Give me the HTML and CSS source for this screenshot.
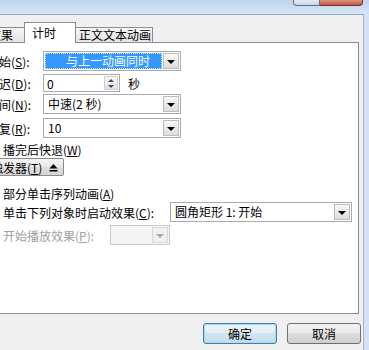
FILE: index.html
```html
<!DOCTYPE html>
<html lang="zh-CN">
<head>
  <meta charset="UTF-8" />
  <meta name="viewport" content="width=device-width, initial-scale=1.0"/>
  <title>计时</title>
  <link rel="stylesheet" href="styles.css">
</head>
<body>

<div class="window">
  <div class="titlebar">
    <span class="cap-btn cap-max"></span>
    <span class="cap-btn cap-close"></span>
  </div>

  <div class="client">
    <div class="tabs">
      <div class="tab tab-first">效果</div>
      <div class="tab tab-active">计时</div>
      <div class="tab tab-last">正文文本动画</div>
    </div>

    <div class="panel">
      <div class="row row-start">
        <span class="lbl">开始(<u>S</u>):</span>
        <div class="combo combo-main">
          <span class="combo-value combo-focus">与上一动画同时</span>
          <span class="combo-drop"></span>
        </div>
      </div>

      <div class="row row-delay">
        <span class="lbl">延迟(<u>D</u>):</span>
        <div class="spin-box">
          <span class="spin-value">0</span>
          <span class="spin">
            <span class="spin-up"></span>
            <span class="spin-down"></span>
          </span>
        </div>
        <span class="unit">秒</span>
      </div>

      <div class="row row-speed">
        <span class="lbl">期间(<u>N</u>):</span>
        <div class="combo combo-main">
          <span class="combo-value">中速(2 秒)</span>
          <span class="combo-drop"></span>
        </div>
      </div>

      <div class="row row-repeat">
        <span class="lbl">重复(<u>R</u>):</span>
        <div class="combo combo-main">
          <span class="combo-value">10</span>
          <span class="combo-drop"></span>
        </div>
      </div>

      <div class="row row-rewind">
        <span class="check"></span>
        <span>播完后快退(<u>W</u>)</span>
      </div>

      <div class="row row-trigger">
        <div class="trigger">
          <span>触发器(<u>T</u>)</span>
          <svg width="9" height="9" viewBox="0 0 9 9">
            <polygon points="0.5,5.5 4.5,1 8.5,5.5" fill="#000"/>
            <rect x="0.5" y="7" width="8" height="1.5" fill="#000"/>
          </svg>
        </div>
      </div>

      <div class="row row-seq">
        <span class="radio"></span>
        <span>部分单击序列动画(<u>A</u>)</span>
      </div>

      <div class="row row-click">
        <span class="radio"></span>
        <span class="opt-label">单击下列对象时启动效果(<u>C</u>):</span>
        <div class="combo combo-wide">
          <span class="combo-value">圆角矩形 1: 开始</span>
          <span class="combo-drop"></span>
        </div>
      </div>

      <div class="row row-play disabled">
        <span class="play-label">开始播放效果(<u>P</u>):</span>
        <div class="combo combo-small">
          <span class="combo-value"></span>
          <span class="combo-drop"></span>
        </div>
      </div>
    </div>

    <div class="actions">
      <button class="btn btn-default">确定</button>
      <button class="btn">取消</button>
    </div>
  </div>
</div>

</body>
</html>
```

FILE: styles.css
```css
* { box-sizing: border-box; }
body { margin: 0; font-family: "Noto Sans CJK SC", "Noto Sans", sans-serif; font-size: 12px; color: #000; }
u { text-decoration: underline; text-underline-offset: 1px; }

.window { width: 369px; height: 350px; overflow: hidden; background: #d4e3f3; display: flex; flex-direction: column; }

/* title bar, only the bottom of the caption buttons shows */
.titlebar { height: 14px; flex: none; display: flex; justify-content: flex-end; align-items: flex-start; padding-right: 6px; background: linear-gradient(#c0d5ec, #d6e5f5); }
.cap-btn { height: 6px; border: 1px solid #5f6f86; border-top: none; }
.cap-max { width: 27px; background: linear-gradient(#e6ecf3, #c9d5e3); border-radius: 0 0 0 4px; }
.cap-close { width: 43px; background: linear-gradient(#dc9585, #c5523f); border-color: #6d3b33; border-left: none; border-radius: 0 0 4px 0; }

.client { flex: 1; margin-right: 5px; background: #f0f0f0; border-top: 1px solid #97a5b6; border-right: 1px solid #a9b6c5; }

/* tabs */
.tabs { height: 27px; display: flex; align-items: flex-end; margin-left: -13px; }
.tab { height: 15px; line-height: 13px; border: 1px solid #898c95; border-bottom: none; background: linear-gradient(#f6f6f6, #e4e4e4); white-space: nowrap; }
.tab-first { width: 37px; padding-left: 1px; border-right: none; }
.tab-active { position: relative; z-index: 1; width: 52px; height: 21px; margin-bottom: -1px; padding-left: 7px; line-height: 19px; background: #fff; }
.tab-last { width: 77px; padding-left: 3px; border-left: none; }

.panel { margin-left: -30px; width: 389px; height: 272px; border: 1px solid #898c95; background: #fff; padding: 8px 0 0 16px; }

.row { display: flex; align-items: center; white-space: nowrap; }
.row-start { height: 20px; }
.row-delay { height: 18px; margin-top: 3px; }
.row-speed { height: 20px; margin-top: 2px; }
.row-repeat { height: 20px; margin-top: 4px; }
.row-rewind { height: 16px; margin-top: 3px; }
.row-trigger { height: 18px; margin-top: 1px; }
.row-seq { height: 16px; margin-top: 9px; }
.row-click { height: 20px; margin-top: 1px; }
.row-play { height: 20px; margin-top: 3px; padding-left: 16px; }

.lbl { width: 56px; flex: none; }

/* combo boxes */
.combo { display: flex; align-items: center; height: 20px; border: 1px solid #a7abb0; background: #fff; padding: 1px; }
.combo-main { width: 138px; }
.combo-wide { width: 182px; }
.combo-small { width: 60px; }
.combo-value { flex: 1; height: 16px; line-height: 16px; padding-left: 3px; overflow: hidden; }
.combo-focus { margin-right: 1px; padding-left: 21px; background: #3399ff; color: #fff; outline: 1px dotted #cfe6ff; outline-offset: -1px; }
.combo-drop { width: 16px; height: 16px; flex: none; border: 1px solid #bcbcbc; background: linear-gradient(#f8f8f8, #dcdcdc); display: flex; align-items: center; justify-content: center; }
.combo-drop::after { content: ""; border-left: 4px solid transparent; border-right: 4px solid transparent; border-top: 4px solid #000; margin-top: 1px; }

/* spinner */
.spin-box { display: flex; align-items: center; width: 77px; height: 18px; border: 1px solid #a7abb0; padding-left: 3px; }
.spin { margin-left: auto; margin-right: 1px; width: 14px; height: 14px; display: flex; flex-direction: column; border: 1px solid #c9ced6; background: linear-gradient(#f4f6f9, #dfe4ea); }
.spin-up, .spin-down { flex: 1; display: flex; align-items: center; justify-content: center; }
.spin-up::after { content: ""; border-left: 3px solid transparent; border-right: 3px solid transparent; border-bottom: 3px solid #4a4a4a; }
.spin-down::after { content: ""; border-left: 3px solid transparent; border-right: 3px solid transparent; border-top: 3px solid #4a4a4a; }
.unit { margin-left: 8px; }

.check { width: 13px; height: 13px; margin-right: 3px; border: 1px solid #8f8f8f; background: #f4f4f4; }
.radio { width: 13px; height: 13px; margin-right: 3px; border: 1px solid #8f8f8f; border-radius: 50%; background: #f4f4f4; }

.trigger { display: flex; align-items: center; gap: 7px; height: 18px; padding: 0 5px 0 3px; border: 1px solid #8b8b8b; border-radius: 2px; background: linear-gradient(#f4f4f4, #e8e8e8 50%, #dedede 50%, #d6d6d6); }

.opt-label { width: 167px; }
.play-label { width: 107px; }

.disabled { color: #a0a0a0; }
.disabled .combo { border-color: #c6c9cd; background: #f4f4f4; }
.disabled .combo-drop { border-color: #d8d8d8; background: #f0f0f0; }
.disabled .combo-drop::after { border-top-color: #a8a8a8; }

/* dialog buttons */
.actions { display: flex; justify-content: flex-end; gap: 10px; padding: 9px 2px 0 0; }
.btn { width: 74px; height: 21px; padding: 0; font: inherit; color: #000; border: 1px solid #707070; border-radius: 3px; background: linear-gradient(#f2f2f2, #ebebeb 45%, #dddddd 50%, #cfcfcf); }
.btn-default { border-color: #3c7fb1; box-shadow: inset 0 0 0 1px #a9d6f3; background: linear-gradient(#eaf4fb, #e2eef7 45%, #d2e4f0 50%, #c7dbea); }
```
